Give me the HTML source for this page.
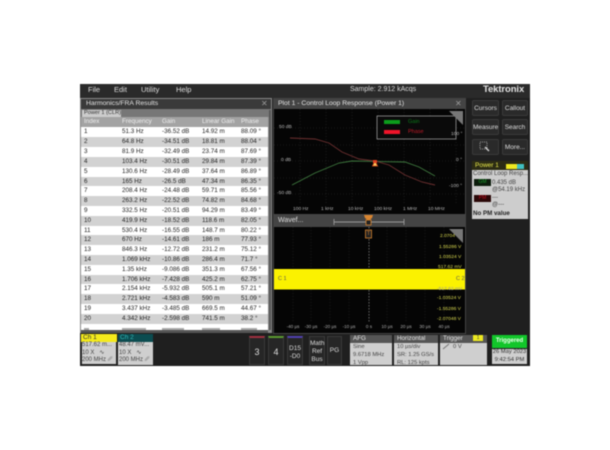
<!DOCTYPE html>
<html><head><meta charset="utf-8"><style>
html,body{margin:0;padding:0;background:#fff;width:610px;height:450px;overflow:hidden}
#w{position:absolute;left:0;top:0;width:610px;height:450px;font-family:"Liberation Sans",sans-serif;filter:blur(.4px);overflow:hidden}
#w div{position:absolute;white-space:nowrap}
.m{color:#ddd;font-size:7.5px;top:85px;line-height:10px}
.r{left:81px;width:187px;height:10px;color:#222;font-size:6.3px;line-height:10px}
.r span{position:absolute;top:0}
.a{left:3px}.b{left:41px}.c{left:81px}.d{left:121px}.e{left:160px}
.o{background:#fff}.z{background:#d2d2d2}
.btn{background:#2a2a2a;color:#ddd;font-size:6.5px;text-align:center;border-radius:2px;border:1px solid #3a3a3a;box-sizing:border-box;line-height:15px}
.y{color:#dcdc50;font-size:4.9px}
.t{color:#aaa;font-size:4.6px;top:324px;width:24px;text-align:center}
.s{color:#b8b8b8;font-size:4.9px}
.v{background:#262626;border:1px solid #3a3a3a;box-sizing:border-box;color:#ddd;text-align:center;top:336px;height:29px}
.h{background:#555;color:#e8e8e8;font-size:6.3px;left:0;right:0;top:0;height:8px;line-height:8px;padding-left:3px}
.g{background:#cfcfcf;color:#444;font-size:5.8px;left:0;right:0;top:8px;bottom:0;line-height:8px;padding-left:3px}
</style></head><body><div id="w">
<div style="left:80px;top:84px;width:450px;height:282px;background:#1f1f1f"></div>
<div style="left:80px;top:84px;width:450px;height:14px;background:#2a2a2a"></div>
<div class="m" style="left:88px">File</div><div class="m" style="left:114px">Edit</div><div class="m" style="left:141px">Utility</div><div class="m" style="left:176px">Help</div>
<div style="left:350px;top:85px;color:#ddd;font-size:7px;line-height:10px">Sample: 2.912 kAcqs</div>
<div style="left:483px;top:84px;color:#e4e4e4;font-size:9.5px;font-weight:bold;letter-spacing:-.1px">Tektronix</div>

<!-- results panel -->
<div style="left:80px;top:98px;width:192px;height:235px;background:#888"></div>
<div style="left:81px;top:99px;width:190px;height:10px;background:#3a3a3a;color:#e2e2e2;font-size:6.8px;line-height:9px;text-indent:5px">Harmonics/FRA Results</div>
<div style="left:261px;top:99px;color:#999;font-size:8px;line-height:9px">✕</div>
<div style="left:81px;top:109px;width:190px;height:8px;background:#777"></div>
<div style="left:82px;top:110px;width:39px;height:7px;background:#ccc;color:#333;font-size:5.6px;line-height:7px;text-indent:2px">Power 1 (CLR)</div>
<div style="left:81px;top:117px;width:187px;height:10px;background:#a3a3a3;color:#eee;font-size:6.3px;line-height:10px"><span style="position:absolute;left:3px">Index</span><span style="position:absolute;left:41px">Frequency</span><span style="position:absolute;left:81px">Gain</span><span style="position:absolute;left:121px">Linear Gain</span><span style="position:absolute;left:160px">Phase</span></div>
<div class="r o" style="top:127px"><span class="a">1</span><span class="b">51.3 Hz</span><span class="c">-36.52 dB</span><span class="d">14.92 m</span><span class="e">88.09 °</span></div>
<div class="r z" style="top:137px"><span class="a">2</span><span class="b">64.8 Hz</span><span class="c">-34.51 dB</span><span class="d">18.81 m</span><span class="e">88.04 °</span></div>
<div class="r o" style="top:147px"><span class="a">3</span><span class="b">81.9 Hz</span><span class="c">-32.49 dB</span><span class="d">23.74 m</span><span class="e">87.69 °</span></div>
<div class="r z" style="top:157px"><span class="a">4</span><span class="b">103.4 Hz</span><span class="c">-30.51 dB</span><span class="d">29.84 m</span><span class="e">87.39 °</span></div>
<div class="r o" style="top:167px"><span class="a">5</span><span class="b">130.6 Hz</span><span class="c">-28.49 dB</span><span class="d">37.64 m</span><span class="e">86.89 °</span></div>
<div class="r z" style="top:177px"><span class="a">6</span><span class="b">165 Hz</span><span class="c">-26.5 dB</span><span class="d">47.34 m</span><span class="e">86.35 °</span></div>
<div class="r o" style="top:186px"><span class="a">7</span><span class="b">208.4 Hz</span><span class="c">-24.48 dB</span><span class="d">59.71 m</span><span class="e">85.56 °</span></div>
<div class="r z" style="top:196px"><span class="a">8</span><span class="b">263.2 Hz</span><span class="c">-22.52 dB</span><span class="d">74.82 m</span><span class="e">84.68 °</span></div>
<div class="r o" style="top:206px"><span class="a">9</span><span class="b">332.5 Hz</span><span class="c">-20.51 dB</span><span class="d">94.29 m</span><span class="e">83.49 °</span></div>
<div class="r z" style="top:216px"><span class="a">10</span><span class="b">419.9 Hz</span><span class="c">-18.52 dB</span><span class="d">118.6 m</span><span class="e">82.05 °</span></div>
<div class="r o" style="top:226px"><span class="a">11</span><span class="b">530.4 Hz</span><span class="c">-16.55 dB</span><span class="d">148.7 m</span><span class="e">80.22 °</span></div>
<div class="r z" style="top:235px"><span class="a">12</span><span class="b">670 Hz</span><span class="c">-14.61 dB</span><span class="d">186 m</span><span class="e">77.93 °</span></div>
<div class="r o" style="top:245px"><span class="a">13</span><span class="b">846.3 Hz</span><span class="c">-12.72 dB</span><span class="d">231.2 m</span><span class="e">75.12 °</span></div>
<div class="r z" style="top:255px"><span class="a">14</span><span class="b">1.069 kHz</span><span class="c">-10.86 dB</span><span class="d">286.4 m</span><span class="e">71.7 °</span></div>
<div class="r o" style="top:265px"><span class="a">15</span><span class="b">1.35 kHz</span><span class="c">-9.086 dB</span><span class="d">351.3 m</span><span class="e">67.56 °</span></div>
<div class="r z" style="top:275px"><span class="a">16</span><span class="b">1.706 kHz</span><span class="c">-7.428 dB</span><span class="d">425.2 m</span><span class="e">62.75 °</span></div>
<div class="r o" style="top:284px"><span class="a">17</span><span class="b">2.154 kHz</span><span class="c">-5.932 dB</span><span class="d">505.1 m</span><span class="e">57.21 °</span></div>
<div class="r z" style="top:294px"><span class="a">18</span><span class="b">2.721 kHz</span><span class="c">-4.583 dB</span><span class="d">590 m</span><span class="e">51.09 °</span></div>
<div class="r o" style="top:304px"><span class="a">19</span><span class="b">3.437 kHz</span><span class="c">-3.485 dB</span><span class="d">669.5 m</span><span class="e">44.67 °</span></div>
<div class="r z" style="top:314px"><span class="a">20</span><span class="b">4.342 kHz</span><span class="c">-2.598 dB</span><span class="d">741.5 m</span><span class="e">38.2 °</span></div>
<div style="left:81px;top:324px;width:187px;height:6px;background:#fff"></div>
<div style="left:84px;top:328px;width:5px;height:1.500px;background:#aaa"></div>
<div style="left:122px;top:328px;width:24px;height:1.500px;background:#aaa"></div>
<div style="left:162px;top:328px;width:22px;height:1.500px;background:#aaa"></div>
<div style="left:202px;top:328px;width:18px;height:1.500px;background:#aaa"></div>
<div style="left:241px;top:328px;width:16px;height:1.500px;background:#aaa"></div>
<div style="left:81px;top:330px;width:187px;height:3px;background:#555"></div>
<div style="left:269px;top:110px;width:2px;height:220px;background:#555"></div>

<!-- plot panel -->
<div style="left:273px;top:98px;width:193px;height:236px;background:#444"></div>
<div style="left:278px;top:99px;color:#e4e4e4;font-size:6.8px;line-height:9px">Plot 1 - Control Loop Response (Power 1)</div>
<div style="left:455px;top:99px;color:#999;font-size:8px;line-height:9px">✕</div>
<svg style="position:absolute;left:274px;top:109px" width="191" height="105" viewBox="274 109 191 105">
<rect x="274" y="109" width="191" height="105" fill="#050505"/>
<g stroke="#2a2a2a" stroke-width=".6" stroke-dasharray="1 2" fill="none">
<path d="M300 109V204M326 109V204M352 109V204M378 109V204M404 109V204M430 109V204M456 109V204"/>
<path d="M274 128H465M274 145H465M274 161H465M274 178H465M274 194H465"/>
</g>
<path d="M292 185L315 173L339 163L352 161L405 162L419 167L435 176" fill="none" stroke="#3f7a3f" stroke-width=".9"/>
<path d="M290 138L315 139L329 143L342 152L359 159L375 161L389 165L405 175L422 182L435 185" fill="none" stroke="#6e3030" stroke-width=".9"/>
<path d="M375 161l-2.500 5h5z" fill="#f6d060" stroke="#e05020" stroke-width=".8"/>
<rect x="373" y="160" width="4" height="3" fill="#e04020"/>
<rect x="377" y="116" width="79" height="23" fill="#0a0a0a" stroke="#aaa" stroke-width=".7"/>
<rect x="384" y="120" width="16" height="4" fill="#0c9c1c"/>
<rect x="384" y="130" width="16" height="4" fill="#f0142a"/>
<path d="M449 111H463V125Z" fill="#777"/>
</svg>
<div style="left:408px;top:119px;color:#0a7a18;font-size:5.500px">Gain</div>
<div style="left:408px;top:129px;color:#c01a28;font-size:5.500px">Phase</div>
<div class="s" style="left:279px;top:125px">50 dB</div><div class="s" style="left:281px;top:158px">0 dB</div><div class="s" style="left:277px;top:191px">-50 dB</div>
<div class="s" style="left:451px;top:132px">100 °</div><div class="s" style="left:456px;top:158px">0 °</div><div class="s" style="left:449px;top:184px">-100 °</div>
<div class="s" style="left:293px;top:207px">100 Hz</div><div class="s" style="left:321px;top:207px">1 kHz</div><div class="s" style="left:348px;top:207px">10 kHz</div><div class="s" style="left:374px;top:207px">100 kHz</div><div class="s" style="left:403px;top:207px">1 MHz</div><div class="s" style="left:428px;top:207px">10 MHz</div>

<!-- waveform panel -->
<div style="left:278px;top:216px;color:#ddd;font-size:7px;line-height:10px">Wavef...</div>
<svg style="position:absolute;left:274px;top:215px" width="191" height="118" viewBox="274 215 191 118">
<rect x="274" y="227" width="191" height="106" fill="#050505"/>
<g stroke="#262626" stroke-width=".6" stroke-dasharray="1 2"><path d="M293 227V322M311 227V322M330 227V322M349 227V322M387 227V322M406 227V322M425 227V322M444 227V322"/></g>
<path d="M369 227V322" stroke="#aaa" stroke-width=".6" stroke-dasharray="1.500 1.500"/>
<path d="M334 219V225M404 219V225M334 222H404" stroke="#999" stroke-width=".9" fill="none"/>
<path d="M364 215h9l-1 3-3.500 3-3.500-3z" fill="#d98530"/>
<rect x="366" y="220" width="5" height="5" fill="#222" stroke="#d98530" stroke-width=".8"/>
<rect x="365.500" y="230" width="6" height="8" fill="#222" stroke="#d98530" stroke-width=".8"/>
<rect x="274" y="269" width="191" height="20.500" fill="#fbf200"/>
<path d="M449 229H463V243Z" fill="#777"/>
</svg>
<div style="left:278px;top:276px;color:#555;font-size:5.500px">C 1</div>
<div style="left:456px;top:276px;color:#555;font-size:5.500px">C 2</div>
<div style="left:367px;top:231px;color:#d98530;font-size:5px">T</div>
<div class="y" style="left:440px;top:234px">2.0704</div>
<div class="y" style="left:439px;top:245px">1.55286 V</div>
<div class="y" style="left:439px;top:255px">1.03524 V</div>
<div class="y" style="left:438px;top:265px">517.62 mV</div>
<div class="y" style="left:437px;top:287px;color:#999">-517.62 mV</div>
<div class="y" style="left:437px;top:296px">-1.03524 V</div>
<div class="y" style="left:437px;top:307px">-1.55286 V</div>
<div class="y" style="left:437px;top:317px">-2.07048 V</div>
<div class="t" style="left:281px">-40 µs</div><div class="t" style="left:299px">-30 µs</div><div class="t" style="left:318px">-20 µs</div><div class="t" style="left:337px">-10 µs</div><div class="t" style="left:357px">0 s</div><div class="t" style="left:375px">10 µs</div><div class="t" style="left:394px">20 µs</div><div class="t" style="left:413px">30 µs</div><div class="t" style="left:432px">40 µs</div>

<!-- right -->
<div class="btn" style="left:472px;top:100px;width:27px;height:16px">Cursors</div>
<div class="btn" style="left:502px;top:100px;width:26px;height:16px">Callout</div>
<div class="btn" style="left:472px;top:119px;width:27px;height:16px">Measure</div>
<div class="btn" style="left:502px;top:119px;width:26px;height:16px">Search</div>
<div class="btn" style="left:472px;top:139px;width:27px;height:16px"></div>
<div class="btn" style="left:502px;top:139px;width:26px;height:16px">More...</div>
<svg style="position:absolute;left:479px;top:141px" width="13" height="12"><rect x="1" y="1" width="7" height="7" fill="none" stroke="#bbb" stroke-width=".8" stroke-dasharray="1 1"/><path d="M6 6l4 4" stroke="#ccc" stroke-width="1.500"/></svg>
<div style="left:472px;top:161px;width:56px;height:9px;background:#2c2c14;color:#e8e84a;font-size:6.500px;line-height:9px;text-indent:3px">Power 1</div>
<div style="left:506px;top:164px;width:11px;height:5px;background:#eeea20"></div>
<div style="left:517px;top:164px;width:7px;height:5px;background:#40c0c0"></div>
<div style="left:472px;top:170px;width:56px;height:49px;background:#cdcdcd"></div>
<div style="left:473px;top:170px;color:#444;font-size:6px;line-height:8px">Control Loop Resp...</div>
<div style="left:474px;top:179px;width:17px;height:7px;background:#0c1c0c;color:#1a9a2a;font-size:5px;line-height:7px;text-align:center">GM</div>
<div style="left:492px;top:179px;color:#444;font-size:6px;line-height:8px">0.435 dB</div>
<div style="left:492px;top:186px;color:#444;font-size:6px;line-height:8px">@54.19 kHz</div>
<div style="left:474px;top:195px;width:17px;height:7px;background:#2a0808;color:#c01020;font-size:5px;line-height:7px;text-align:center">PM</div>
<div style="left:492px;top:194px;color:#444;font-size:6px;line-height:8px">---</div>
<div style="left:492px;top:201px;color:#444;font-size:6px;line-height:8px">@---</div>
<div style="left:473px;top:210px;color:#222;font-size:6.200px;line-height:8px;font-weight:bold">No PM value</div>

<!-- bottom -->
<div style="left:81px;top:334px;width:36px;height:31px;background:#cfcfcf;border:1px solid #222;box-sizing:border-box"></div>
<div style="left:81px;top:334px;width:36px;height:8px;background:#f4ea1c;color:#333;font-size:6.500px;line-height:8px;text-indent:2px">Ch 1</div>
<div style="left:82px;top:342px;color:#444;font-size:6px;line-height:7.500px">517.62 m...<br>10 X &nbsp; ∿<br>200 MHz ␥</div>
<div style="left:118px;top:334px;width:35px;height:31px;background:#cfcfcf"></div>
<div style="left:118px;top:334px;width:35px;height:8px;background:#0b4c50;color:#33b6b6;font-size:6.500px;line-height:8px;text-indent:2px">Ch 2</div>
<div style="left:119px;top:342px;color:#444;font-size:6px;line-height:7.500px">48.47 mV...<br>10 X &nbsp; ∿<br>200 MHz ␥</div>
<div class="v" style="left:249px;width:16px;font-size:9px;line-height:28px;border-top:2px solid #a03040">3</div>
<div class="v" style="left:268px;width:16px;font-size:9px;line-height:28px;border-top:2px solid #5a9a30">4</div>
<div class="v" style="left:287px;width:16px;font-size:6.500px;line-height:8px;padding-top:7px;border-top:2px solid #5040b0">D15<br>-D0</div>
<div class="v" style="left:309px;width:16px;font-size:6.500px;line-height:8px;padding-top:3px">Math<br>Ref<br>Bus</div>
<div class="v" style="left:327px;width:15px;font-size:6.500px;line-height:27px">PG</div>
<div style="left:350px;top:335px;width:42px;height:30px"><div class="h">AFG</div><div class="g">Sine<br>9.6718 MHz<br>1 Vpp</div></div>
<div style="left:394px;top:335px;width:44px;height:30px"><div class="h">Horizontal</div><div class="g">10 µs/div<br>SR: 1.25 GS/s<br>RL: 125 kpts</div></div>
<div style="left:440px;top:335px;width:47px;height:30px"><div class="h">Trigger</div><div class="g"><span style="padding-left:10px">0 V</span></div></div>
<div style="left:473px;top:335px;width:10px;height:6px;background:#eeea20;color:#444;font-size:5px;line-height:6px;text-align:center">1</div>
<svg style="position:absolute;left:442px;top:343px" width="8" height="7"><path d="M1 6L7 1" stroke="#777" stroke-width="1"/></svg>
<div style="left:492px;top:335px;width:35px;height:13px;background:#12c62a;color:#eaffea;font-size:6px;font-weight:bold;line-height:13px;text-align:center">Triggered</div>
<div style="left:492px;top:349px;width:35px;height:15px;background:#cfcfcf;color:#333;font-size:5.800px;line-height:7.500px;text-align:center">26 May 2023<br>9:42:54 PM</div>
</div></body></html>
